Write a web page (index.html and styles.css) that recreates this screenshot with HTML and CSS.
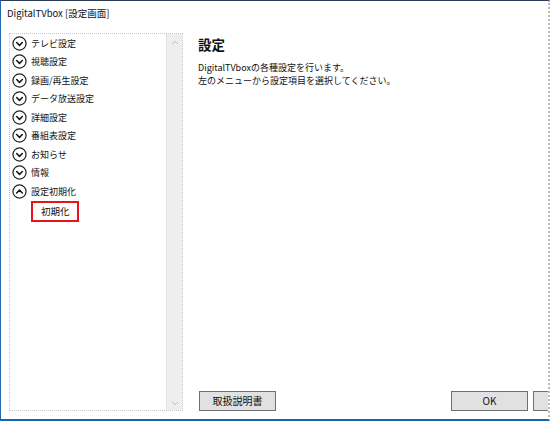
FILE: index.html
```html
<!DOCTYPE html>
<html lang="ja">
<head>
<meta charset="utf-8">
<link rel="stylesheet" href="styles.css">
</head>
<body>
<div class="window">
  <div class="titlebar">DigitalTVbox [設定画面]</div>
  <div class="main">
    <div class="tree">
      <ul class="items">
        <li class="item"><svg class="ico" viewBox="0 0 16 16"><circle cx="8" cy="8" r="7" /><path d="M5 7l3 3 3-3" /></svg><span>テレビ設定</span></li>
        <li class="item"><svg class="ico" viewBox="0 0 16 16"><circle cx="8" cy="8" r="7" /><path d="M5 7l3 3 3-3" /></svg><span>視聴設定</span></li>
        <li class="item"><svg class="ico" viewBox="0 0 16 16"><circle cx="8" cy="8" r="7" /><path d="M5 7l3 3 3-3" /></svg><span>録画/再生設定</span></li>
        <li class="item"><svg class="ico" viewBox="0 0 16 16"><circle cx="8" cy="8" r="7" /><path d="M5 7l3 3 3-3" /></svg><span>データ放送設定</span></li>
        <li class="item"><svg class="ico" viewBox="0 0 16 16"><circle cx="8" cy="8" r="7" /><path d="M5 7l3 3 3-3" /></svg><span>詳細設定</span></li>
        <li class="item"><svg class="ico" viewBox="0 0 16 16"><circle cx="8" cy="8" r="7" /><path d="M5 7l3 3 3-3" /></svg><span>番組表設定</span></li>
        <li class="item"><svg class="ico" viewBox="0 0 16 16"><circle cx="8" cy="8" r="7" /><path d="M5 7l3 3 3-3" /></svg><span>お知らせ</span></li>
        <li class="item"><svg class="ico" viewBox="0 0 16 16"><circle cx="8" cy="8" r="7" /><path d="M5 7l3 3 3-3" /></svg><span>情報</span></li>
        <li class="item"><svg class="ico" viewBox="0 0 16 16"><circle cx="8" cy="8" r="7" /><path d="M5 9.5l3-3 3 3" /></svg><span>設定初期化</span></li>
        <li class="sub"><span class="hl">初期化</span></li>
      </ul>
      <div class="scrollbar">
        <svg class="arr" viewBox="0 0 9 6"><path d="M1 5l3.5-3.5L8 5" /></svg>
        <svg class="arr" viewBox="0 0 9 6"><path d="M1 1l3.5 3.5L8 1" /></svg>
      </div>
    </div>
    <div class="content">
      <h1 class="heading">設定</h1>
      <p class="desc">DigitalTVboxの各種設定を行います。<br>左のメニューから設定項目を選択してください。</p>
      <div class="buttons">
        <button class="btn">取扱説明書</button>
        <div class="spacer"></div>
        <button class="btn">OK</button>
        <button class="btn btn-cut" aria-label="キャンセル"></button>
      </div>
    </div>
  </div>
</div>
</body>
</html>
```
FILE: styles.css
```css
html, body {
  margin: 0;
  padding: 0;
  background: #fff;
}
body {
  width: 550px;
  height: 421px;
  overflow: hidden;
  font-family: "Noto Sans CJK JP", "Noto Sans", sans-serif;
  color: #111;
}
.window {
  box-sizing: border-box;
  width: 550px;
  height: 421px;
  border-top: 1px solid #2c3f57;
  border-left: 1px solid #2468ad;
  border-bottom: 2px solid #1b63ad;
  border-right: 2px dotted #b8b8b8;
  display: flex;
  flex-direction: column;
  overflow: hidden;
  background: #fff;
}
.titlebar {
  height: 24px;
  line-height: 24px;
  padding-left: 6px;
  font-size: 9.5px;
  color: #111;
  flex: none;
}
.main {
  flex: 1;
  display: flex;
  padding: 8px 0 8px 8px;
  min-height: 0;
}
.tree {
  box-sizing: border-box;
  width: 174px;
  flex: none;
  border: 1px dotted #c8c8c8;
  display: flex;
  background: #fff;
}
.items {
  list-style: none;
  margin: 0;
  padding: 0 0 0 2px;
  flex: 1;
}
.item {
  height: 18.5px;
  display: flex;
  align-items: center;
  font-size: 9px;
  gap: 4px;
}
.item:first-child {
  margin-top: 0;
}
.ico {
  width: 15px;
  height: 15px;
  flex: none;
}
.ico circle {
  fill: none;
  stroke: #222;
  stroke-width: 1.3;
}
.ico path {
  fill: none;
  stroke: #111;
  stroke-width: 1.6;
  stroke-linecap: round;
  stroke-linejoin: round;
}
.sub {
  display: flex;
  height: 21px;
  padding-left: 19px;
  margin-top: 0;
}
.hl {
  display: flex;
  align-items: center;
  box-sizing: border-box;
  height: 21px;
  padding: 0 7px 0 8px;
  border: 2px solid #e8141c;
  font-size: 9.5px;
}
.scrollbar {
  width: 15px;
  flex: none;
  background: #eeeeee;
  border-left: 1px dotted #d6d6d6;
  display: flex;
  flex-direction: column;
  justify-content: space-between;
  align-items: center;
  padding: 6px 0 4px;
}
.arr {
  width: 8px;
  height: 5px;
}
.arr path {
  fill: none;
  stroke: #b8b8b8;
  stroke-width: 1.1;
}
.content {
  flex: 1;
  display: flex;
  flex-direction: column;
  padding-left: 15px;
  min-width: 0;
}
.heading {
  margin: 2px 0 0;
  font-size: 13.5px;
  font-weight: bold;
  line-height: 18px;
}
.desc {
  margin: 8px 0 0;
  font-size: 9px;
  line-height: 13px;
}
.buttons {
  margin-top: auto;
  display: flex;
  gap: 5px;
  padding-left: 1px;
}
.spacer {
  flex: 1;
}
.btn {
  box-sizing: border-box;
  width: 77px;
  height: 20px;
  flex: none;
  border: 1px solid #707070;
  background: #e1e1e1;
  font-family: "Noto Sans CJK JP", "Noto Sans", sans-serif;
  font-size: 10px;
  color: #111;
  padding: 0;
  line-height: 18px;
}
.btn-cut {
  margin-right: -62px;
}
```
